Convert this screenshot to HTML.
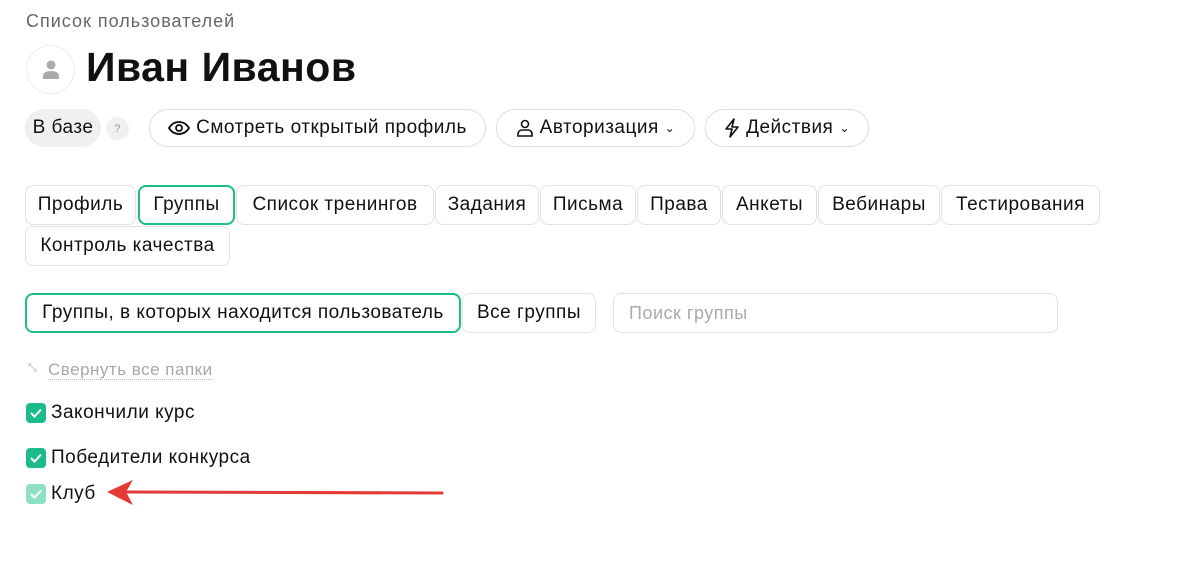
<!DOCTYPE html><html><head><meta charset="utf-8"><style>
body{margin:0;width:1200px;height:572px;background:#fff;font-family:"Liberation Sans",sans-serif;color:#111;position:relative;overflow:hidden;letter-spacing:0.5px}
.a{position:absolute;box-sizing:border-box;white-space:nowrap}
.t{border:1px solid #e2e2e2;border-radius:8px;height:40px;display:flex;align-items:center;justify-content:center;font-size:19px}
.p{border:1px solid #ddd;border-radius:20px;height:38px;display:flex;align-items:center;justify-content:center;font-size:19px;gap:6px}
.cb{width:20px;height:20px;border-radius:4px;background:#1bbc8a;display:flex;align-items:center;justify-content:center}
.l{font-size:19px}
</style></head><body>
<div class="a" style="left:26px;top:11px;font-size:18px;color:#666;letter-spacing:1px">Список пользователей</div>
<div class="a" style="left:26px;top:45px;width:49px;height:49px;border-radius:50%;border:1px solid #eee;display:flex;align-items:center;justify-content:center">
<svg width="18" height="20" viewBox="0 0 18 20"><circle cx="9" cy="5" r="4.5" fill="#aaa"/><path d="M1 19v-3c0-3 3-5 8-5s8 2 8 5v3z" fill="#aaa"/></svg></div>
<div class="a" style="left:86px;top:44px;font-size:41px;font-weight:bold;letter-spacing:0.5px">Иван Иванов</div>
<div class="a" style="left:25px;top:109px;width:76px;height:38px;border-radius:19px;background:#f0f0f0;font-size:19px;display:flex;align-items:center;justify-content:center">В базе</div>
<div class="a" style="left:106px;top:117px;width:23px;height:23px;border-radius:50%;background:#f0f0f0;font-size:11px;color:#999;display:flex;align-items:center;justify-content:center">?</div>
<div class="a p" style="left:149px;top:109px;width:337px"><svg width="22" height="14" viewBox="0 0 22 14"><path d="M1 7C4 2 8 1 11 1s7 1 10 6c-3 5-7 6-10 6S4 12 1 7z" fill="none" stroke="#111" stroke-width="1.8"/><circle cx="11" cy="7" r="3" fill="none" stroke="#111" stroke-width="1.8"/></svg>Смотреть открытый профиль</div>
<div class="a p" style="left:496px;top:109px;width:199px"><svg width="18" height="18" viewBox="0 0 18 18"><circle cx="9" cy="5" r="3.5" fill="none" stroke="#111" stroke-width="1.6"/><path d="M2 17v-2c0-2.5 2-4 4-4h6c2 0 4 1.5 4 4v2z" fill="none" stroke="#111" stroke-width="1.6"/></svg>Авторизация <span style="font-size:12px">⌄</span></div>
<div class="a p" style="left:705px;top:109px;width:164px"><svg width="16" height="20" viewBox="0 0 16 20"><path d="M10 1L2 11h6l-2 8 8-10H8z" fill="none" stroke="#111" stroke-width="1.6" stroke-linejoin="round"/></svg>Действия <span style="font-size:12px">⌄</span></div>
<div class="a t" style="left:25px;top:185px;width:111px">Профиль</div>
<div class="a t" style="left:138px;top:185px;width:97px;border:2px solid #1bbc8a">Группы</div>
<div class="a t" style="left:236px;top:185px;width:198px">Список тренингов</div>
<div class="a t" style="left:435px;top:185px;width:104px">Задания</div>
<div class="a t" style="left:540px;top:185px;width:96px">Письма</div>
<div class="a t" style="left:637px;top:185px;width:84px">Права</div>
<div class="a t" style="left:722px;top:185px;width:95px">Анкеты</div>
<div class="a t" style="left:818px;top:185px;width:122px">Вебинары</div>
<div class="a t" style="left:941px;top:185px;width:159px">Тестирования</div>
<div class="a t" style="left:25px;top:226px;width:205px">Контроль качества</div>
<div class="a t" style="left:25px;top:293px;width:436px;border:2px solid #1bbc8a">Группы, в которых находится пользователь</div>
<div class="a t" style="left:462px;top:293px;width:134px">Все группы</div>
<div class="a t" style="left:613px;top:293px;width:445px;justify-content:flex-start;padding-left:15px;color:#aaa;font-size:18px">Поиск группы</div>
<div class="a" style="left:28px;top:362px;font-size:11px;color:#aaa">⤡</div>
<div class="a" style="left:48px;top:361px;font-size:17px;color:#a8a8a8;border-bottom:1px dotted #bbb;line-height:18px;letter-spacing:0.5px">Свернуть все папки</div>
<div class="a" style="left:26px;top:402px;display:flex;gap:5px;align-items:center"><div class="cb"><svg width="12" height="10"><path d="M1 5l3.5 3.5L11 1.5" fill="none" stroke="#fff" stroke-width="2"/></svg></div><span class="l">Закончили курс</span></div>
<div class="a" style="left:26px;top:447px;display:flex;gap:5px;align-items:center"><div class="cb"><svg width="12" height="10"><path d="M1 5l3.5 3.5L11 1.5" fill="none" stroke="#fff" stroke-width="2"/></svg></div><span class="l">Победители конкурса</span></div>
<div class="a" style="left:26px;top:483px;display:flex;gap:5px;align-items:center"><div class="cb" style="background:#8ce0c4"><svg width="12" height="10"><path d="M1 5l3.5 3.5L11 1.5" fill="none" stroke="#fff" stroke-width="2"/></svg></div><span class="l">Клуб</span></div>
<svg class="a" style="left:100px;top:478px" width="350" height="30"><path d="M22 14L342 15" stroke="#e53935" stroke-width="3" stroke-linecap="round"/><path d="M7 14L33 2L26 14L33 27z" fill="#e53935"/></svg>
</body></html>
